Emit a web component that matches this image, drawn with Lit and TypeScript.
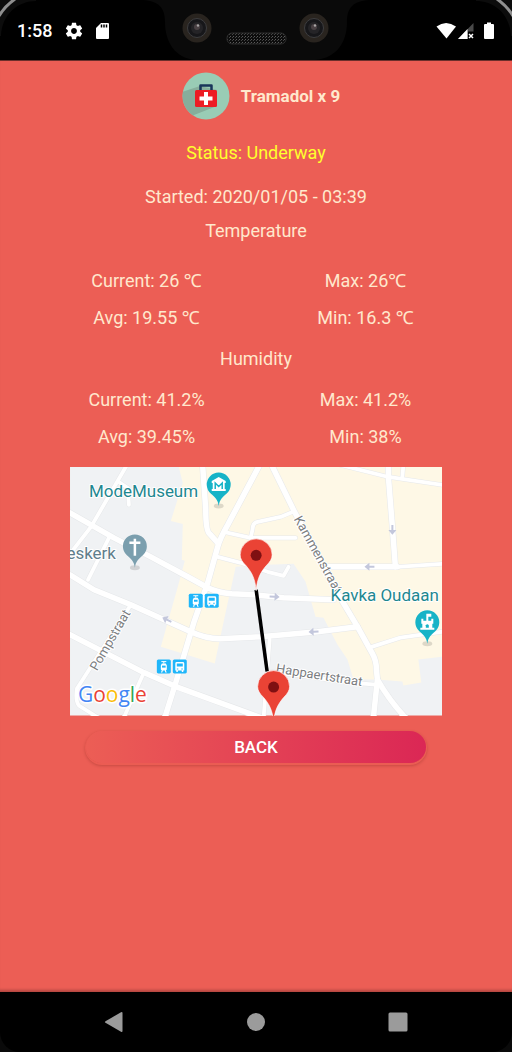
import { LitElement, html, css, svg } from "lit";
import { customElement, property } from "lit/decorators.js";

@customElement("status-bar")
class StatusBar extends LitElement {
  static styles = css`
    :host { display: block; background: #0a0a0a; }
    .bar {
      position: relative;
      display: grid;
      grid-template-columns: 1fr auto 1fr;
      height: 60px;
      background: #000;
      border-bottom: 1px solid #6b2f2b;
      border-radius: 36px 36px 0 0;
      color: #fff;
    }
    .side { display: flex; align-items: center; gap: 12px; padding: 2px 17px 0; }
    .right { justify-content: flex-end; gap: 0; }
    .time { font-size: 18px; font-weight: 500; line-height: 24px; }
    svg { display: block; flex: none; }
    .corner { position: absolute; top: 0; left: 0; }
    .corner.end { left: auto; right: 0; transform: scaleX(-1); }
    .battery { margin-left: 8px; }
  `;

  private corner(cls: string) {
    return html`<svg class="corner ${cls}" width="36" height="36" viewBox="0 0 36 36" aria-hidden="true">
      <path d="M0 0H36V1C18 1 2 14 1 36H0Z" fill="#0c0c0c" />
      <path d="M-1 16C3 9 8 4 15 -1" fill="none" stroke="#8f8f8f" stroke-width="3" />
    </svg>`;
  }

  private camera(cx: number) {
    return svg`
      <circle cx=${cx} cy="28" r="14.500" fill="#29241f" />
      <circle cx=${cx} cy="28" r="9.500" fill="#17171a" stroke="#3d3d3f" />
      <circle cx=${cx} cy="28" r="6" fill="#252427" />
      <circle cx=${cx} cy="27" r="3" fill="#4a4144" />
      <circle cx=${cx + 1} cy="25.500" r="1.200" fill="#a9a6a6" />`;
  }

  render() {
    return html`
      <div class="bar">
        ${this.corner("")}${this.corner("end")}
        <div class="side">
          <span class="time">1:58</span>
          <svg width="20" height="20" viewBox="0 0 24 24" fill="#fff" role="img" aria-label="Settings">
            <path d="M19.430 12.980c.04-.32.07-.64.07-.98s-.03-.66-.07-.98l2.110-1.650c.19-.15.24-.42.12-.64l-2-3.460c-.12-.22-.39-.3-.61-.22l-2.490 1c-.52-.4-1.080-.73-1.690-.98l-.38-2.650C14.460 2.180 14.250 2 14 2h-4c-.25 0-.46.18-.49.42l-.38 2.650c-.61.25-1.170.59-1.690.98l-2.490-1c-.23-.09-.49 0-.61.22l-2 3.460c-.13.22-.07.49.12.64l2.110 1.650c-.04.32-.07.65-.07.98s.03.66.07.98l-2.110 1.650c-.19.15-.24.42-.12.64l2 3.460c.12.22.39.3.61.22l2.490-1c.52.4 1.080.73 1.690.98l.38 2.650c.03.24.24.42.49.42h4c.25 0 .46-.18.49-.42l.38-2.650c.61-.25 1.170-.59 1.690-.98l2.490 1c.23.09.49 0 .61-.22l2-3.460c.12-.22.07-.49-.12-.64l-2.110-1.650zM12 15.500c-1.930 0-3.500-1.570-3.500-3.500s1.570-3.500 3.500-3.500 3.500 1.570 3.500 3.500-1.570 3.500-3.500 3.500z" />
          </svg>
          <svg width="14" height="18" viewBox="0 0 14 18" role="img" aria-label="SD card">
            <path d="M5 1H12Q13 1 13 2V16Q13 17 12 17H1Q0 17 0 16V6Z" fill="#fff" />
            <path d="M5.500 2.500V5.500M8 2.500V5.500M10.500 2.500V5.500" stroke="#000" stroke-width="1.500" />
          </svg>
        </div>
        <svg width="226" height="60" viewBox="0 0 226 60" aria-hidden="true">
          <defs>
            <pattern id="mesh" width="3" height="3" patternUnits="userSpaceOnUse">
              <rect width="3" height="3" fill="#0d0d0d" /><rect width="1" height="1" fill="#5a5a5a" /><rect x="2" y="1" width="1" height="1" fill="#444" />
            </pattern>
          </defs>
          <path d="M0 0C16 1 22 8 22 22C22 42 32 58 52 60H172C194 58 204 42 204 22C204 8 210 1 226 0Z" fill="#0a0a0a" />
          ${this.camera(54)}${this.camera(171)}
          <rect x="84" y="33" width="59" height="11" rx="5" fill="url(#mesh)" stroke="#2c2c2c" />
        </svg>
        <div class="side right">
          <svg width="21" height="18" viewBox="0 0 21 18" role="img" aria-label="Wi-Fi"><path d="M.5 4.500Q10 -2.500 20 4.500L10.500 16.500Z" fill="#fff" /></svg>
          <svg width="18" height="18" viewBox="0 0 18 18" role="img" aria-label="No mobile signal">
            <path d="M16.500 1V9.500H11V17H1Z" fill="#4a4a4a" /><path d="M10.500 7V17H1Z" fill="#fff" />
            <path d="M12 12L16 16M16 12L12 16" stroke="#fff" stroke-width="1.500" />
          </svg>
          <svg class="battery" width="12" height="18" viewBox="0 0 12 18" role="img" aria-label="Battery full"><path d="M4 .5H8V2H10Q11 2 11 3V16Q11 17 10 17H2Q1 17 1 16V3Q1 2 2 2H4Z" fill="#fff" /></svg>
        </div>
      </div>
    `;
  }
}

@customElement("shipment-map")
class ShipmentMap extends LitElement {
  static styles = css`
    :host { display: block; }
    svg { display: block; width: 100%; height: auto; overflow: hidden; }
    text { paint-order: stroke; stroke: #fff; stroke-width: 2px; stroke-linejoin: round; }
    .place { font-size: 17px; fill: #1e8790; }
    .church { fill: #607d8b; }
    .street { font-size: 13px; fill: #7b7d80; }
    .google { font-size: 21px; font-family: "Open Sans", Roboto, sans-serif; font-weight: 500; stroke-width: 3px; }
    .blue { fill: #4285f4; }
    .red { fill: #ea4335; }
    .yellow { fill: #fbbc05; }
    .green { fill: #34a853; }
  `;

  private wideRoads = [
    "M0 46L44 71L81 90L118 110L138 121Q148 126 162 127L184 128L214 131L264 133",
    "M133 0L136 43Q136 64 140 67L148 76",
    "M190 -2L158 58Q150 72 148 80L138 116L124 156L106 216L95 251",
    "M202 -2L224 43L266 123L288 160L303 187Q307 194 307 203L308 213Q320 234 336 251",
    "M0 108L24 123L61 138L121 165Q136 172 150 172L191 170L248 165L288 160",
    "M319 -2V10L323 60L326 100",
    "M258 100H328",
    "M0 168L74 206L106 220L191 251",
    "M308 213L304 251",
  ];

  private roads = [
    "M57 -2L21 60L0 87",
    "M49 15L58 21L59 38",
    "M154 65L181 71H226",
    "M148 90L171 96L198 105L214 109L219 100",
    "M223 45L211 50L188 55Q183 56 183 62L181 71",
    "M271 -2L319 10L373 18",
    "M333 10L334 -2",
    "M328 100L373 97",
    "M39 71L18 113",
    "M61 138L7 222Q5 234 9 239L28 251",
    "M74 206L54 251",
    "M200 173L194 251",
    "M201 205L281 216L306 218",
    "M303 180L331 171L373 165",
  ];

  private arrow(x: number, y: number, angle: number) {
    return svg`<path transform="translate(${x} ${y}) rotate(${angle})" d="M-5 -1H0V-4L5 0L0 4V1H-5Z" fill="#c3c7dc" />`;
  }

  private pin(x: number, y: number) {
    return svg`<g transform="translate(${x} ${y})">
      <path d="M0 0C-1 -13 -5 -19 -10 -25C-14 -29 -16 -32 -16 -36A16 16 0 0 1 16 -36C16 -32 14 -29 10 -25C5 -19 1 -13 0 0Z" fill="#ea4335" stroke="#fff" stroke-width=".6" />
      <circle cy="-35.500" r="5.500" fill="#7f1012" /></g>`;
  }

  private poi(x: number, y: number, color: string, glyph: unknown) {
    return svg`<g transform="translate(${x} ${y})">
      <ellipse cy="21" rx="5" ry="2.500" fill="#000" opacity=".13" />
      <path d="M0 21C-1 14 -4 12 -8 8.500A12 12 0 1 1 8 8.500C4 12 1 14 0 21Z" fill=${color} />${glyph}</g>`;
  }

  private transit(x: number, y: number) {
    return svg`<g transform="translate(${x} ${y})">
      <rect width="14" height="14" rx="1.500" fill="#1fb6fa" />
      <path d="M4.500 2H9.500M7 2V4" fill="none" stroke="#fff" />
      <path d="M5 4H9L10 6V10L9 11H5L4 10V6ZM5 11H6L5.500 13H4ZM8 11H9L10 13H8.500Z" fill="#fff" />
      <path d="M5.200 6H8.800V8H5.200Z" fill="#1fb6fa" />
      <rect x="16" width="14" height="14" rx="1.500" fill="#1fb6fa" />
      <path d="M18.500 4Q18.500 2.500 20 2.500H26Q27.500 2.500 27.500 4V11H26.500V12.500H25V11H21V12.500H19.500V11H18.500Z" fill="#fff" />
      <path d="M20 4H26V7H20ZM20 9H21.500V10H20ZM24.500 9H26V10H24.500Z" fill="#1fb6fa" /></g>`;
  }

  render() {
    return html`
      <svg viewBox="0 0 373 249" role="img" aria-label="Map of the shipment route">
        <rect width="373" height="249" fill="#f0f2f4" />
        <path fill="#fef8e6" d="M109 0L113 16L101 54L113 57L112 93L115 94L108 120L91 180L145 197L158 136L161 123L166 100L198 98L224 97L236 115L246 150L254 151L268 178L278 193L284 213H308L333 215L334 219L352 216L349 193L373 190V0Z" />
        <g fill="none" stroke-linejoin="round" stroke-linecap="round">
          <g stroke="#e6e8ea">
            ${this.wideRoads.map((d) => svg`<path d=${d} stroke-width="6.500" />`)}
            ${this.roads.map((d) => svg`<path d=${d} stroke-width="4.800" />`)}
          </g>
          <g stroke="#fff">
            ${this.wideRoads.map((d) => svg`<path d=${d} stroke-width="5.500" />`)}
            ${this.roads.map((d) => svg`<path d=${d} stroke-width="3.800" />`)}
          </g>
        </g>
        ${this.arrow(323, 63, 90)}${this.arrow(300, 100, 180)}${this.arrow(205, 130, 3)}
        ${this.arrow(244, 165, 177)}${this.arrow(97, 153, 205)}
        <text class="street" transform="translate(224 52) rotate(61)">Kammenstraat</text>
        <text class="street" transform="translate(27 205) rotate(-60)">Pompstraat</text>
        <text class="street" transform="translate(206 206) rotate(9)">Happaertstraat</text>
        <text class="place" x="19" y="30">ModeMuseum</text>
        <text class="place church" x="46" y="92" text-anchor="end">eskerk</text>
        <text class="place" x="261" y="134">Kavka Oudaan</text>
        ${this.poi(149, 18, "#17b3c7", svg`<path d="M-7 -4L0 -8L7 -4V-2H6V4H7V6H-7V4H-6V-2H-7Z" fill="#fff" /><path d="M-3.500 4V-2L0 1.500L3.500 -2V4" fill="none" stroke="#17b3c7" stroke-width="1.500" />`)}
        ${this.poi(65, 80, "#7b9fae", svg`<path d="M0 -8V9M-5.500 -4H5.500" fill="none" stroke="#fff" stroke-width="2.500" />`)}
        ${this.poi(358, 156, "#17b3c7", svg`<path d="M-6 -4H-4V-2H-1V-9H4V-6H1V-2H4V-4H6V1H5V5H7V7H-7V5H-5V1H-6Z" fill="#fff" /><path d="M-1.500 5V2.500Q0 .5 1.500 2.500V5Z" fill="#17b3c7" />`)}
        ${this.transit(119, 127)}${this.transit(87, 193)}
        <path d="M186.500 123L197.500 205" stroke="#000" stroke-width="3.500" />
        ${this.pin(186.5, 124)}${this.pin(204, 256)}
        <text class="google" x="8" y="235"><tspan class="blue">G</tspan><tspan class="red">o</tspan><tspan class="yellow">o</tspan><tspan class="blue">g</tspan><tspan class="green">l</tspan><tspan class="red">e</tspan></text>
      </svg>
    `;
  }
}

@customElement("nav-bar")
class NavBar extends LitElement {
  static styles = css`
    :host { display: block; background: #0a0a0a; }
    .bar {
      display: flex;
      justify-content: center;
      height: 60px;
      background: #000;
      border-radius: 0 0 20px 20px;
    }
    button {
      flex: 0 1 142px;
      display: grid;
      place-items: center;
      border: 0;
      padding: 0;
      background: none;
    }
    svg { display: block; fill: #9b9b9b; }
  `;

  render() {
    return html`
      <nav class="bar">
        <button aria-label="Back"><svg width="20" height="20" viewBox="0 0 20 20"><path d="M1.500 9.200L17 .3Q18.500 -.3 18.500 1V19Q18.500 20.300 17 19.700L1.500 10.800Q.3 10 1.500 9.200Z" /></svg></button>
        <button aria-label="Home"><svg width="20" height="20" viewBox="0 0 20 20"><circle cx="10" cy="10" r="9" /></svg></button>
        <button aria-label="Recent apps"><svg width="20" height="20" viewBox="0 0 20 20"><rect x=".5" y=".5" width="19" height="19" rx="1.500" /></svg></button>
      </nav>
    `;
  }
}

@customElement("reading-group")
class ReadingGroup extends LitElement {
  @property({ type: Array }) readings: string[] = [];

  static styles = css`
    :host { display: block; width: 100%; }
    ul {
      display: grid;
      grid-template-columns: 1fr 1fr;
      row-gap: 13px;
      margin: 0;
      padding: 0;
      list-style: none;
      text-align: center;
    }
  `;

  render() {
    return html`<ul>${this.readings.map((r) => html`<li>${r}</li>`)}</ul>`;
  }
}

@customElement("app-root")
class AppRoot extends LitElement {
  static styles = css`
    :host {
      display: flex;
      flex-direction: column;
      min-height: 100vh;
      font: 18px/24px Roboto, "Noto Sans", sans-serif;
      background: #ec5e55;
      color: #ffe8cd;
    }
    main {
      flex: 1;
      display: flex;
      flex-direction: column;
      align-items: center;
      padding: 11px 37px 24px;
      box-shadow: inset 0 -4px 3px -2px rgba(0, 0, 0, 0.25);
    }
    header { display: flex; align-items: center; gap: 11px; padding-left: 10px; }
    header svg { display: block; }
    h1, h2, p { margin: 0; font-size: 18px; line-height: 24px; font-weight: 400; }
    h1 { font-size: 17px; font-weight: 700; }
    .status { margin-top: 21px; color: #ffff2e; }
    .started { margin-top: 20px; }
    .temperature { margin: 10px 0 26px; }
    .humidity { margin: 17px 0; }
    .panel { width: 85%; margin-top: 18px; }
    .back {
      display: block;
      width: calc(100% - 32px);
      height: 32px;
      margin: 15px auto 0;
      border: 0;
      border-radius: 16px;
      padding: 0;
      background: linear-gradient(90deg, #ec5e55, #db2755);
      box-shadow: 0 1px 0 1px #eb5c53, 0 2px 3px 1px rgba(90, 20, 10, 0.25);
      color: #fff;
      font: 500 17px/32px Roboto, sans-serif;
    }
  `;

  render() {
    return html`
      <status-bar></status-bar>
      <main>
        <header>
          <svg width="48" height="48" viewBox="0 0 48 48" aria-hidden="true">
            <defs><clipPath id="disc"><circle cx="24" cy="24" r="23.500" /></clipPath></defs>
            <g clip-path="url(#disc)">
              <rect width="48" height="48" fill="#99ccb5" />
              <path d="M18 14L0 20V48H8L12 43L35 34V18Z" fill="#86ae9b" />
            </g>
            <path d="M18.500 18V13.500H29.500V18" fill="none" stroke="#19355a" stroke-width="2.500" stroke-linejoin="round" />
            <rect x="13" y="18" width="22" height="17" rx="1.500" fill="#ed1c24" />
            <path d="M24 20V33M17.500 26.500H30.500" stroke="#fff" stroke-width="4" />
          </svg>
          <h1>Tramadol x 9</h1>
        </header>
        <p class="status">Status: Underway</p>
        <p class="started">Started: 2020/01/05 - 03:39</p>
        <h2 class="temperature">Temperature</h2>
        <reading-group .readings=${["Current: 26 ℃", "Max: 26℃", "Avg: 19.55 ℃", "Min: 16.3 ℃"]}></reading-group>
        <h2 class="humidity">Humidity</h2>
        <reading-group .readings=${["Current: 41.2%", "Max: 41.2%", "Avg: 39.45%", "Min: 38%"]}></reading-group>
        <div class="panel">
          <shipment-map></shipment-map>
          <button class="back">BACK</button>
        </div>
      </main>
      <nav-bar></nav-bar>
    `;
  }
}
